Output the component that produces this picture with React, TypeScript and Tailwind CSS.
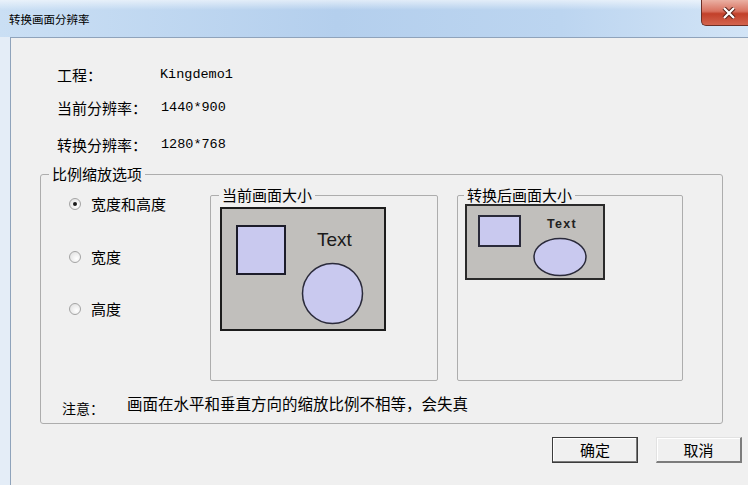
import React from 'react';

// 单选按钮
function Radio({ checked = false, label }: { checked?: boolean; label: string }) {
  return (
    <label className="flex h-[20px] items-center gap-[10px] text-[15px] leading-[20px]">
      <span className="flex h-[12px] w-[12px] items-center justify-center rounded-full border border-[#a4a4a4] bg-[radial-gradient(circle_at_65%_65%,#ffffff,#dcdcdc)]">
        {checked && <span className="h-[4px] w-[4px] rounded-full bg-[#1a1a1a]" />}
      </span>
      <span>{label}</span>
    </label>
  );
}

function Button({ label, primary = false }: { label: string; primary?: boolean }) {
  return (
    <button
      type="button"
      className={
        primary
          ? 'h-[26px] w-[86px] border border-[#3c3c3c] bg-[#f0f0f0] text-[15px] leading-[20px] shadow-[inset_-1px_-1px_0_#7a7a7a,inset_1px_1px_0_#ffffff]'
          : 'h-[26px] w-[86px] border-t border-l border-r-2 border-b-2 border-t-[#e2e2e2] border-l-[#e2e2e2] border-r-[#7c7c7c] border-b-[#7c7c7c] bg-[#f0f0f0] text-[15px] leading-[20px] shadow-[inset_1px_1px_0_#ffffff]'
      }
    >
      {label}
    </button>
  );
}

const CurrentPreview = () => (
  <svg width="167" height="125" viewBox="0 0 167 125">
    <rect x="1" y="1" width="164" height="122" fill="#c1bfbc" stroke="#1c1c1c" strokeWidth="2" />
    <rect x="17" y="19" width="48" height="48" fill="#c9c9ef" stroke="#1c1c2a" strokeWidth="2" />
    <text x="97" y="39" fontFamily="'Liberation Sans', Arial, sans-serif" fontSize="19" fill="#1a1a1a">
      Text
    </text>
    <circle cx="112.5" cy="86.5" r="30" fill="#c9c9ef" stroke="#2a2a3a" strokeWidth="1.5" />
  </svg>
);

const ConvertedPreview = () => (
  <svg width="140" height="76" viewBox="0 0 140 76">
    <rect x="1" y="1" width="138" height="74" fill="#c1bfbc" stroke="#2a2a2a" strokeWidth="2" />
    <rect x="14" y="12" width="41" height="30" fill="#c9c9ef" stroke="#2a2a3a" strokeWidth="2" />
    <text
      x="82"
      y="24"
      fontFamily="'Liberation Sans', Arial, sans-serif"
      fontSize="12.5"
      fontWeight="bold"
      letterSpacing="1.3"
      fill="#222"
    >
      Text
    </text>
    <ellipse cx="95" cy="53" rx="26" ry="18.5" fill="#c9c9ef" stroke="#2a2a3a" strokeWidth="1.5" />
  </svg>
);

export default function App() {
  return (
    <div className="h-[485px] w-[748px] overflow-hidden bg-[#f0f0f0] font-['Noto_Sans_CJK_SC','Noto_Sans',sans-serif] text-[#000]">
      {/* 标题栏 */}
      <div className="flex h-[37px] items-start justify-between bg-[linear-gradient(to_bottom,rgba(255,255,255,0.6),rgba(255,255,255,0)_10px),linear-gradient(to_right,#cadff4,#b4cfed_45%,#bcd5f0_75%,#d2e4f6)]">
        <span className="pl-[9px] pt-[11px] text-[11.5px] leading-[16px]">转换画面分辨率</span>
        <div className="flex h-[26px] w-[47px] items-center justify-center rounded-bl-[5px] border-b border-l border-[#6b2f26] bg-[linear-gradient(to_bottom,#eab0a3,#d8715f_45%,#c2402a_55%,#d3644e)] pl-[8px]">
          <svg width="14" height="12" viewBox="0 0 14 12">
            <path d="M2 1 L12 11 M12 1 L2 11" stroke="#5a2018" strokeWidth="4.2" />
            <path d="M2 1 L12 11 M12 1 L2 11" stroke="#ffffff" strokeWidth="2.2" />
          </svg>
        </div>
      </div>

      <div className="flex h-[448px]">
        <div className="w-[10px] bg-[#e4edf7]" />
        <div className="flex-1 border-l border-t border-[#8fa3bb] bg-[#f0f0f0]">
          {/* 工程信息 */}
          <div className="pl-[46px] pt-[27px]">
            <div className="flex h-[20px] items-center">
              <span className="w-[103px] text-[15px] leading-[20px]">工程：</span>
              <span className="font-['Liberation_Mono',monospace] text-[13.5px]">Kingdemo1</span>
            </div>
            <div className="mt-[13px] flex h-[20px] items-center">
              <span className="w-[104px] text-[15px] leading-[20px]">当前分辨率：</span>
              <span className="font-['Liberation_Mono',monospace] text-[13.5px]">1440*900</span>
            </div>
            <div className="mt-[17px] flex h-[20px] items-center">
              <span className="w-[104px] text-[15px] leading-[20px]">转换分辨率：</span>
              <span className="font-['Liberation_Mono',monospace] text-[13.5px]">1280*768</span>
            </div>
          </div>

          {/* 比例缩放选项 */}
          <fieldset className="ml-[29px] mt-[11px] w-[683px] rounded-[3px] border border-[#adadad] pb-[5px]">
            <legend className="ml-[8px] px-[3px] text-[15px] leading-[16px]">比例缩放选项</legend>
            <div className="flex">
              <div className="flex w-[169px] flex-col pl-[28px] pt-[12px]">
                <Radio checked label="宽度和高度" />
                <div className="mt-[33px]">
                  <Radio label="宽度" />
                </div>
                <div className="mt-[32px]">
                  <Radio label="高度" />
                </div>
              </div>

              <fieldset className="mt-[5px] h-[194px] w-[228px] rounded-[2px] border border-[#adadad]">
                <legend className="ml-[8px] px-[3px] text-[15px] leading-[16px]">当前画面大小</legend>
                <div className="pl-[9px] pt-[4px]">
                  <CurrentPreview />
                </div>
              </fieldset>

              <fieldset className="ml-[19px] mt-[5px] h-[194px] w-[226px] rounded-[2px] border border-[#adadad]">
                <legend className="ml-[6px] px-[3px] text-[15px] leading-[16px]">转换后画面大小</legend>
                <div className="pl-[7px] pt-[1px]">
                  <ConvertedPreview />
                </div>
              </fieldset>
            </div>

            <div className="mt-[12px] flex items-start pl-[21px]">
              <span className="mt-[5px] w-[65px] text-[14px] leading-[20px]">注意：</span>
              <span className="text-[15.5px] leading-[20px]">画面在水平和垂直方向的缩放比例不相等，会失真</span>
            </div>
          </fieldset>

          <div className="mt-[13px] flex justify-end gap-[18px] pr-[6px]">
            <Button primary label="确定" />
            <Button label="取消" />
          </div>
        </div>
      </div>
    </div>
  );
}
